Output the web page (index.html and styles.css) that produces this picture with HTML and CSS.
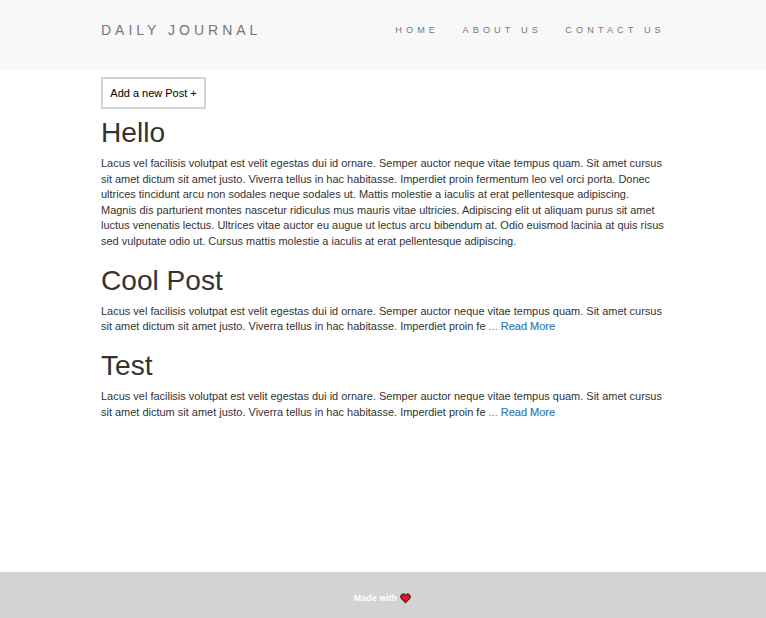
FILE: index.html
```html
<!DOCTYPE html>
<html lang="en">
<head>
<meta charset="utf-8">
<title>Daily Journal</title>
<link rel="stylesheet" href="styles.css">
</head>
<body>
<nav class="navbar">
  <div class="container nav-row">
    <a class="brand">DAILY JOURNAL</a>
    <ul class="menu"><li>HOME</li><li>ABOUT US</li><li>CONTACT US</li></ul>
  </div>
</nav>
<main class="container">
  <a class="add">Add a new Post +</a>
  <h1>Hello</h1>
  <p>Lacus vel facilisis volutpat est velit egestas dui id ornare. Semper auctor neque vitae tempus quam. Sit amet cursus<br>sit amet dictum sit amet justo. Viverra tellus in hac habitasse. Imperdiet proin fermentum leo vel orci porta. Donec<br>ultrices tincidunt arcu non sodales neque sodales ut. Mattis molestie a iaculis at erat pellentesque adipiscing.<br>Magnis dis parturient montes nascetur ridiculus mus mauris vitae ultricies. Adipiscing elit ut aliquam purus sit amet<br>luctus venenatis lectus. Ultrices vitae auctor eu augue ut lectus arcu bibendum at. Odio euismod lacinia at quis risus<br>sed vulputate odio ut. Cursus mattis molestie a iaculis at erat pellentesque adipiscing.</p>
  <h1>Cool Post</h1>
  <p>Lacus vel facilisis volutpat est velit egestas dui id ornare. Semper auctor neque vitae tempus quam. Sit amet cursus<br>sit amet dictum sit amet justo. Viverra tellus in hac habitasse. Imperdiet proin fe <span class="dots">...</span> <a class="more">Read More</a></p>
  <h1>Test</h1>
  <p>Lacus vel facilisis volutpat est velit egestas dui id ornare. Semper auctor neque vitae tempus quam. Sit amet cursus<br>sit amet dictum sit amet justo. Viverra tellus in hac habitasse. Imperdiet proin fe <span class="dots">...</span> <a class="more">Read More</a></p>
</main>
<footer class="footer">
  <span>Made with</span>
  <svg class="heart" viewBox="0 0 11 11"><path d="M5.500 9.800 1.200 5.500C-.6 2.500 3-.8 5.500 2 8-.8 11.600 2.500 9.800 5.500Z"/></svg>
</footer>
</body>
</html>
```
FILE: styles.css
```css
* { box-sizing: border-box; }
body {
  margin: 0;
  min-height: 618px;
  display: flex;
  flex-direction: column;
  background: #fff;
  color: #333;
  font: 10.98px/15.6px "Liberation Sans", Arial, sans-serif;
}
.container { width: 565px; margin-left: 101px; white-space: nowrap; }
.navbar { height: 70px; background: #f8f8f8; color: #777; }
.nav-row { display: flex; justify-content: space-between; padding-top: 22px; }
.brand { font-size: 14px; letter-spacing: 4px; line-height: 16px; }
.menu {
  display: flex;
  gap: 23.5px;
  list-style: none;
  margin: 0;
  padding: 0 1.2px 0 0;
  font-size: 9.15px;
  letter-spacing: 4.1px;
  line-height: 16.6px;
}
main { flex: 1; }
.add {
  display: block;
  width: 105px;
  height: 32px;
  margin-top: 7px;
  border: 2px solid #d3d3d3;
  line-height: 28px;
  text-align: center;
  color: #000;
}
h1 { margin: 8px 0; font-size: 28.1px; font-weight: 400; line-height: 31px; }
p { margin: 0 0 15px; }
p:last-child { line-height: 15.9px; }
.dots { color: #777; }
.more { color: #337ab7; -webkit-text-stroke: 0.2px #337ab7; }
.footer {
  height: 46px;
  display: flex;
  align-items: center;
  justify-content: center;
  gap: 3px;
  padding: 7px 1px 0 0;
  background: #d3d3d3;
  color: #fff;
  font-size: 9px;
  font-weight: 700;
}
.heart { width: 11px; height: 11px; margin-top: -1px; fill: #e81224; stroke: #000; stroke-width: 1; }
```
